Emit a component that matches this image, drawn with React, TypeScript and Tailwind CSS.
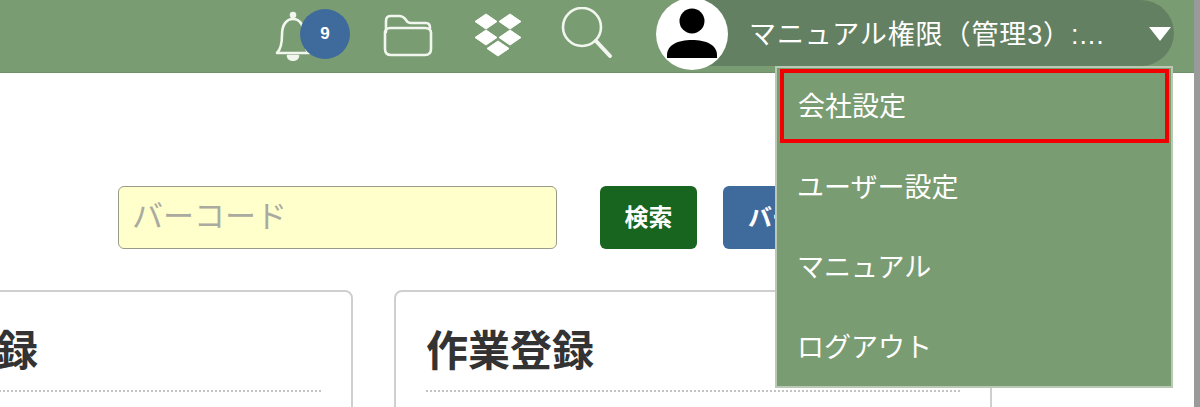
import React from "react";

const font = { fontFamily: '"Liberation Sans", "Noto Sans CJK JP", sans-serif' };

function Bell() {
  return (
    <svg width="36" height="50" viewBox="0 0 36 50" fill="none" stroke="#f1f6ee" strokeWidth="2.6" strokeLinecap="round" strokeLinejoin="round">
      <path d="M2 42 C6 38 7 33 7 24 C7 13 12 8 18 8 C24 8 29 13 29 24 C29 33 30 38 34 42 Z" />
      <circle cx="18" cy="4" r="2" fill="#f1f6ee" />
      <path d="M13 45 C14 50 22 50 23 45 Z" fill="#f1f6ee" />
    </svg>
  );
}

function Folder() {
  return (
    <svg width="50" height="44" viewBox="0 0 50 44" fill="none" stroke="#f1f6ee" strokeWidth="2.6" strokeLinejoin="round" strokeLinecap="round">
      <path d="M3 18 V7 C3 3 5 2 8 2 H16 C19 2 21 3 23 6 C24 8 25 9 28 9 H43 C46 9 47 11 47 14" />
      <path d="M2 19 C2 16 4 14 7 14 H42 C46 14 48 16 48 19 V35 C48 39 46 41 42 41 H8 C4 41 2 39 2 35 Z" />
    </svg>
  );
}

function Dropbox() {
  return (
    <svg width="50" height="44" viewBox="0 0 50 44" fill="#ffffff" stroke="#ffffff" strokeWidth="1" strokeLinejoin="round" className="mb-[3px]">
      <path d="M13 1 L24 8.5 L13 16 L2 8.5 Z" />
      <path d="M37 1 L48 8.5 L37 16 L26 8.5 Z" />
      <path d="M13 17 L24 24.5 L13 32 L2 24.5 Z" />
      <path d="M37 17 L48 24.5 L37 32 L26 24.5 Z" />
      <path d="M25 28 L36 35.5 L25 43 L14 35.5 Z" />
    </svg>
  );
}

function Search() {
  return (
    <svg width="52" height="52" viewBox="0 0 52 52" fill="none" stroke="#f1f6ee" strokeLinecap="round" className="mb-[6px]">
      <circle cx="21" cy="20" r="19" strokeWidth="2.6" />
      <path d="M35 34 L49 49" strokeWidth="4" />
    </svg>
  );
}

function Avatar() {
  return (
    <div className="w-[72px] h-[72px] shrink-0 rounded-full bg-white overflow-hidden mt-[1px]">
      <svg width="72" height="72" viewBox="0 0 72 72" fill="#000000">
        <circle cx="36" cy="23" r="12.5" />
        <path d="M11 60 V57 C11 47 22 42 36 42 C50 42 61 47 61 57 V60 Z" />
      </svg>
    </div>
  );
}

const menu = ["ユーザー設定", "マニュアル", "ログアウト"];

export default function App() {
  return (
    <div className="relative w-[1200px] h-[407px] overflow-hidden bg-white flex" style={font}>
      <div className="w-[1194px] shrink-0">
        <header className="h-[73px] bg-[#7a9c72] flex items-center justify-end pr-[20px] border-b border-[#6f9068]">
          <div className="flex items-center mr-[43px]">
            <div className="relative w-[76px] h-[50px] flex items-center">
              <Bell />
              <span className="absolute left-[25px] top-[-2px] w-[50px] h-[50px] rounded-full bg-[#3f6a9c] text-white text-[17px] font-bold flex items-center justify-center">9</span>
            </div>
            <div className="ml-[32px] flex"><Folder /></div>
            <div className="ml-[40px] flex"><Dropbox /></div>
            <div className="ml-[38px] flex"><Search /></div>
          </div>
          <div className="w-[518px] h-[66px] self-start rounded-full bg-[#648062] flex items-center">
            <Avatar />
            <span className="ml-[21px] mt-[4px] text-[27px] tracking-[0.9px] leading-none text-white whitespace-nowrap">マニュアル権限（管理3）:...</span>
            <span className="ml-auto mr-[3px] mt-[2px] w-0 h-0 border-x-[11px] border-x-transparent border-t-[14px] border-t-white" />
          </div>
        </header>

        <main className="pt-[113px] pl-[118px]">
          <div className="flex items-start">
            <input
              placeholder="バーコード"
              className="w-[439px] h-[63px] pl-[13px] pr-[15px] pb-[2px] rounded-[6px] border border-[#9a9a8a] bg-[#ffffcc] text-[31px] placeholder:text-[#aaaaa0] outline-none"
            />
            <button className="ml-[43px] w-[97px] h-[63px] rounded-[6px] bg-[#18651f] text-white text-[24px] font-bold">検索</button>
            <button className="ml-[26px] w-[170px] h-[63px] pl-[25px] text-left rounded-[6px] bg-[#3f6a9c] text-white text-[24px] font-bold whitespace-nowrap">バーコード</button>
          </div>
          <div className="flex mt-[41px] ml-[-363px]">
            <section className="w-[598px] h-[160px] shrink-0 rounded-[8px] border-2 border-[#cfcfcf] px-[30px]">
              <h2 className="h-[100px] pt-[31px] pl-[83px] border-b-2 border-dotted border-[#c4c4c4] text-[42px] leading-[58px] font-bold text-[#333333] whitespace-nowrap">作業登録</h2>
            </section>
            <section className="ml-[41px] w-[598px] h-[160px] shrink-0 rounded-[8px] border-2 border-[#cfcfcf] px-[30px]">
              <h2 className="h-[100px] pt-[31px] border-b-2 border-dotted border-[#c4c4c4] text-[42px] leading-[58px] font-bold text-[#333333] whitespace-nowrap">作業登録</h2>
            </section>
          </div>
        </main>
      </div>
      <div className="flex-1 bg-[#9a9a9a]" />

      <div className="absolute top-[66px] left-[775px] w-[398px] h-[322px] bg-[#7a9c72] border-2 border-[#b9c9b4] pt-[1px] pl-[3px] pr-[2px]">
        <div className="h-[74px] border-[4px] border-[#f00000] flex items-center pl-[14px] pt-[3px] text-white text-[27px]">会社設定</div>
        <div className="mt-[5px]">
          {menu.map((m) => (
            <div key={m} className="h-[80px] flex items-center pl-[17px] text-white text-[27px]">{m}</div>
          ))}
        </div>
      </div>
    </div>
  );
}
